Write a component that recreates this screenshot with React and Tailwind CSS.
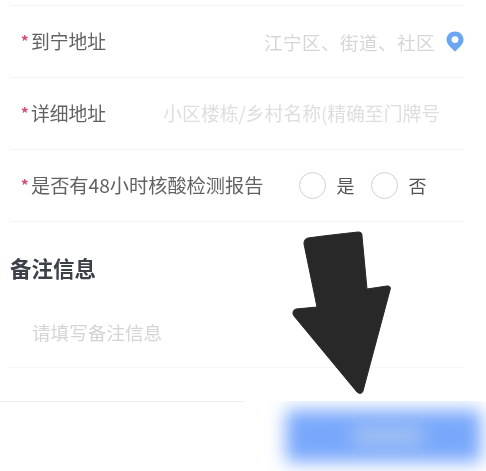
const font = { fontFamily: '"Noto Sans CJK SC", sans-serif' };

function Star() {
  return <span className="ml-[10px] w-[10px] shrink-0 text-[15px] font-bold text-[#d9476b]">*</span>;
}

function PinIcon() {
  return (
    <svg width="18" height="21" viewBox="0 0 18 21" className="ml-[11px] shrink-0">
      <path d="M9 20.5 C6 17.5 .5 13.5 .5 8.7 C.5 4 4.3 .5 9 .5 C13.7 .5 17.5 4 17.5 8.7 C17.5 13.5 12 17.5 9 20.5 Z" fill="#6ba6f2" />
      <circle cx="9" cy="8.6" r="3.4" fill="#ffffff" />
    </svg>
  );
}

function Radio({ label }) {
  return (
    <div className="flex items-center">
      <span className="w-[27px] h-[27px] rounded-full border border-[#cfcfcf] bg-white" />
      <span className="ml-[10px] text-[18px] text-[#555555]">{label}</span>
    </div>
  );
}

function Row({ children }) {
  return (
    <div className="ml-[11px] mr-[22px] h-[72px] flex items-center border-b border-[#f3f3f3] blur-[0.4px]">
      {children}
    </div>
  );
}

export default function App() {
  return (
    <div style={font} className="relative w-[486px] h-[471px] overflow-hidden bg-white">
      <div className="ml-[11px] mr-[22px] h-[6px] border-b border-[#f3f3f3]" />

      <Row>
        <Star />
        <span className="text-[18.8px] text-[#626262]">到宁地址</span>
        <span className="ml-auto text-[18.6px] text-[#d6d6d6] tracking-[0.4px]">江宁区、街道、社区</span>
        <PinIcon />
      </Row>

      <Row>
        <Star />
        <span className="text-[18.8px] text-[#626262]">详细地址</span>
        <span className="ml-auto mr-[24px] text-[18.8px] text-[#dedede]">小区楼栋/乡村名称(精确至门牌号</span>
      </Row>

      <Row>
        <Star />
        <span className="text-[19.2px] text-[#626262]">是否有48小时核酸检测报告</span>
        <div className="ml-[36px] flex items-center gap-[17px]">
          <Radio label="是" />
          <Radio label="否" />
        </div>
      </Row>

      <h2 className="ml-[10px] mt-[31px] text-[21.5px] leading-[30px] font-semibold text-[#3c4048] blur-[0.4px]">备注信息</h2>

      <div className="ml-[8px] mr-[22px] mt-[35px] h-[50px] pl-[24px] border-b border-[#f5f5f5] blur-[0.4px]">
        <p className="text-[18.6px] leading-[28px] text-[#d4d4d4]">请填写备注信息</p>
      </div>

      <div className="mt-[33px] flex h-[71px]">
        <div className="w-[244px] border-t border-[#eeeeee]" />
        <div className="flex-1 overflow-hidden">
          <div className="ml-[42px] mt-[9px] mr-[5px] h-[52px] flex items-center justify-center bg-[#78a7fb] blur-[9px]">
            <span className="ml-[8px] w-[72px] h-[16px] bg-[#a9c6f2]" />
          </div>
        </div>
      </div>

      <svg width="110" height="175" viewBox="285 225 110 175" className="absolute left-[285px] top-[225px]">
        <path
          d="M308 238 C322 236 340 234 358 232 C361 232 362 233 362 236 L367 289 L387 286 C390 286 391 287 390 290 L363 391 C362 394 359 394 357 392 L294 316 C292 313 293 310 296 309 L317 307 L304 244 C304 240 305 239 308 238 Z"
          fill="#282828"
          stroke="#282828"
          strokeLinejoin="round"
        />
      </svg>
    </div>
  );
}
